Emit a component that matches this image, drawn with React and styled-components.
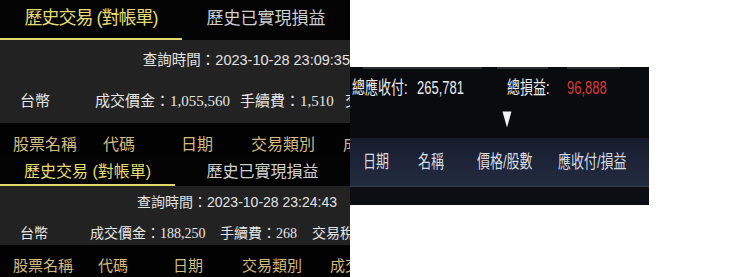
import React from "react";
import styled, { createGlobalStyle } from "styled-components";

const Global = createGlobalStyle`
  html, body { margin: 0; padding: 0; background: #ffffff; }
  body { font-family: "Liberation Sans", "Noto Sans CJK TC", sans-serif; }
  * { box-sizing: border-box; }
`;

const Page = styled.div`
  display: flex;
  align-items: flex-start;
  width: 730px;
  height: 277px;
  overflow: hidden;
`;

const LeftCol = styled.div`
  width: 350px;
  flex: none;
  display: flex;
  flex-direction: column;
`;

const Screen = styled.section`
  width: 350px;
  overflow: hidden;
  background: #000;
  font-family: "Liberation Sans", "Noto Sans CJK TC", sans-serif;
`;

const TabBar = styled.div`
  display: flex;
  height: ${(p) => p.$h}px;
  background: #030303;
`;

const Tab = styled.div`
  flex: ${(p) => (p.$w ? "none" : "1")};
  width: ${(p) => (p.$w ? `${p.$w}px` : "auto")};
  display: flex;
  align-items: center;
  justify-content: center;
  padding-bottom: ${(p) => p.$pb || 0}px;
  font-size: ${(p) => p.$fs}px;
  letter-spacing: ${(p) => p.$ls || 0}px;
  white-space: nowrap;
  color: ${(p) => (p.$active ? "#e4dc72" : "#cfcfcf")};
  border-bottom: 2px solid ${(p) => (p.$active ? "#e2d86a" : "transparent")};
`;

const Info = styled.div`
  background: #222222;
  display: flex;
  flex-direction: column;
`;

const QueryLine = styled.div`
  height: ${(p) => p.$h}px;
  display: flex;
  align-items: center;
  justify-content: flex-end;
  padding-right: ${(p) => p.$pr}px;
  font-size: ${(p) => p.$fs}px;
  color: #e2e2e2;
  white-space: nowrap;
`;

const SummaryRow = styled.div`
  height: ${(p) => p.$h}px;
  display: flex;
  align-items: center;
  padding-left: 20px;
  padding-top: ${(p) => p.$pt || 0}px;
  font-size: ${(p) => p.$fs}px;
  color: #e6e6e6;
  white-space: nowrap;
  overflow: hidden;
`;

const SumCell = styled.div`
  flex: none;
  width: ${(p) => (p.$w ? `${p.$w}px` : "auto")};
  white-space: nowrap;
`;

const Money = styled.span`
  font-family: "Liberation Serif", serif;
`;

const HeaderRow = styled.div`
  height: ${(p) => p.$h}px;
  display: flex;
  align-items: flex-start;
  padding-left: 13px;
  padding-top: ${(p) => p.$pt || 0}px;
  font-size: ${(p) => p.$fs}px;
  color: #d3bb84;
  background: #020202;
  white-space: nowrap;
  overflow: hidden;
`;

const HeadCell = styled.div`
  flex: none;
  width: ${(p) => (p.$w ? `${p.$w}px` : "auto")};
`;

const Panel = styled.div`
  margin-top: 67px;
  width: 299px;
  height: 138px;
  flex: none;
  background: #0a0b0e;
  display: flex;
  flex-direction: column;
  overflow: hidden;
  font-family: "Liberation Sans", "Noto Sans CJK TC", sans-serif;
`;

const Strip = styled.div`
  height: 2px;
  display: flex;
  padding-left: 13px;
`;

const Seg = styled.div`
  width: ${(p) => p.$w}px;
  margin-left: ${(p) => p.$ml || 0}px;
  background: #2c2e33;
`;

const PanelRow = styled.div`
  height: ${(p) => p.$h}px;
  display: flex;
  align-items: center;
  padding-left: ${(p) => p.$pl}px;
`;

const PCell = styled.div`
  flex: none;
  width: ${(p) => (p.$w ? `${p.$w}px` : "auto")};
  color: ${(p) => p.$color || "#eceff2"};
`;

const Cond = styled.span`
  display: inline-block;
  font-size: 13px;
  line-height: 14px;
  transform: scaleY(1.38);
  transform-origin: center;
  white-space: nowrap;
`;

const ArrowArea = styled.div`
  height: 33px;
  padding-left: 152px;
  padding-top: 6px;
`;

const Band = styled.div`
  height: 49px;
  display: flex;
  align-items: center;
  padding-left: 13px;
  padding-bottom: 2px;
  background: linear-gradient(#171d2d, #232b40);
  border-bottom: 1px solid #363e54;
  color: #d9dde3;
`;

const PanelFoot = styled.div`
  flex: 1;
  background: #0c0e13;
`;

function TopScreen() {
  return (
    <Screen>
      <TabBar $h={40}>
        <Tab $w={182} $active $fs={18} $ls={-1} $pb={6}>歷史交易 (對帳單)</Tab>
        <Tab $fs={17} $pb={6}>歷史已實現損益</Tab>
      </TabBar>
      <Info>
        <QueryLine $h={36} $pr={0} $fs={14.5}>查詢時間：2023-10-28 23:09:35</QueryLine>
        <SummaryRow $h={47} $fs={15}>
          <SumCell $w={75}>台幣</SumCell>
          <SumCell $w={145}>成交價金：<Money>1,055,560</Money></SumCell>
          <SumCell $w={105}>手續費：<Money>1,510</Money></SumCell>
          <SumCell>交</SumCell>
        </SummaryRow>
      </Info>
      <HeaderRow $h={32} $pt={8} $fs={16}>
        <HeadCell $w={90}>股票名稱</HeadCell>
        <HeadCell $w={78}>代碼</HeadCell>
        <HeadCell $w={70}>日期</HeadCell>
        <HeadCell $w={92}>交易類別</HeadCell>
        <HeadCell>成</HeadCell>
      </HeaderRow>
    </Screen>
  );
}

function BottomScreen() {
  return (
    <Screen>
      <TabBar $h={31}>
        <Tab $w={175} $active $fs={16}>歷史交易 (對帳單)</Tab>
        <Tab $fs={16}>歷史已實現損益</Tab>
      </TabBar>
      <Info>
        <QueryLine $h={30} $pr={13} $fs={14}>查詢時間：2023-10-28 23:24:43</QueryLine>
        <SummaryRow $h={29} $pt={3} $fs={14}>
          <SumCell $w={70}>台幣</SumCell>
          <SumCell $w={130}>成交價金：<Money>188,250</Money></SumCell>
          <SumCell $w={92}>手續費：<Money>268</Money></SumCell>
          <SumCell>交易稅</SumCell>
        </SummaryRow>
      </Info>
      <HeaderRow $h={40} $pt={9} $fs={15}>
        <HeadCell $w={85}>股票名稱</HeadCell>
        <HeadCell $w={75}>代碼</HeadCell>
        <HeadCell $w={69}>日期</HeadCell>
        <HeadCell $w={88}>交易類別</HeadCell>
        <HeadCell>成交</HeadCell>
      </HeaderRow>
    </Screen>
  );
}

function RightPanel() {
  return (
    <Panel>
      <Strip>
        <Seg $w={119} />
        <Seg $w={51} $ml={15} />
        <Seg $w={53} $ml={19} />
      </Strip>
      <PanelRow $h={36} $pl={2}>
        <PCell $w={65}><Cond>總應收付:</Cond></PCell>
        <PCell $w={90}><Cond>265,781</Cond></PCell>
        <PCell $w={60}><Cond>總損益:</Cond></PCell>
        <PCell $color="#d63b3b"><Cond>96,888</Cond></PCell>
      </PanelRow>
      <ArrowArea>
        <svg width="10" height="17" viewBox="0 0 10 17">
          <polygon points="0.5,0.5 9.5,0.5 5,16.5" fill="#f4f4f4" />
        </svg>
      </ArrowArea>
      <Band>
        <PCell $w={55} $color="#d9dde3"><Cond>日期</Cond></PCell>
        <PCell $w={59} $color="#d9dde3"><Cond>名稱</Cond></PCell>
        <PCell $w={81} $color="#d9dde3"><Cond>價格/股數</Cond></PCell>
        <PCell $color="#d9dde3"><Cond>應收付/損益</Cond></PCell>
      </Band>
      <PanelFoot />
    </Panel>
  );
}

export default function App() {
  return (
    <>
      <Global />
      <Page>
        <LeftCol>
          <TopScreen />
          <BottomScreen />
        </LeftCol>
        <RightPanel />
      </Page>
    </>
  );
}
